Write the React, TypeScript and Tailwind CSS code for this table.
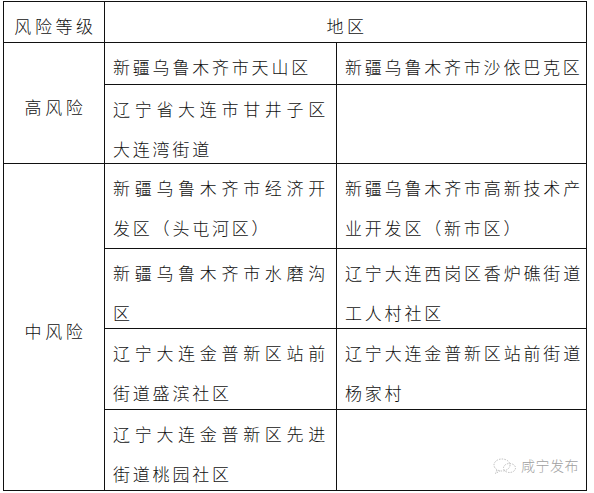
import React from "react";

const font = "font-['Noto_Sans_CJK_SC','Noto_Sans_CJK_JP',sans-serif] font-light";

function Cell({ lines, wide }: { lines: string[]; wide?: boolean }) {
  return (
    <div
      className={`bg-white pl-2 ${wide ? "pr-[3px]" : "pr-2"} pt-[4px] text-[17px] leading-[40px] tracking-[2.8px] text-[#111]`}
    >
      {lines.map((l, i) => (
        <div
          key={i}
          className={
            i < lines.length - 1 ? "whitespace-nowrap text-justify [text-align-last:justify]" : "whitespace-nowrap"
          }
        >
          {l}
        </div>
      ))}
    </div>
  );
}

function Label({ text, className = "" }: { text: string; className?: string }) {
  return (
    <div
      className={`flex items-center justify-center bg-white pt-2 text-[17px] tracking-[3.6px] text-[#111] ${className}`}
    >
      <span className="pl-[3px]">{text}</span>
    </div>
  );
}

export default function App() {
  return (
    <div className={`relative h-[493px] w-[594px] bg-white ${font}`}>
      <div className="pl-[3px] pt-[1px]">
        <div className="grid w-fit grid-cols-[100px_231px_249px] grid-rows-[40px_41px_78px_84px_79px_80px_80px] gap-px border border-[#111] bg-[#111]">
          <Label text="风险等级" className="col-start-1 row-start-1" />
          <Label text="地区" className="col-span-2 col-start-2 row-start-1" />
          <Label text="高风险" className="col-start-1 row-span-2 row-start-2" />
          <Cell lines={["新疆乌鲁木齐市天山区"]} />
          <Cell wide lines={["新疆乌鲁木齐市沙依巴克区"]} />
          <Cell lines={["辽宁省大连市甘井子区", "大连湾街道"]} />
          <Cell wide lines={[""]} />
          <Label text="中风险" className="col-start-1 row-span-4 row-start-4" />
          <Cell lines={["新疆乌鲁木齐市经济开", "发区（头屯河区）"]} />
          <Cell wide lines={["新疆乌鲁木齐市高新技术产", "业开发区（新市区）"]} />
          <Cell lines={["新疆乌鲁木齐市水磨沟", "区"]} />
          <Cell wide lines={["辽宁大连西岗区香炉礁街道", "工人村社区"]} />
          <Cell lines={["辽宁大连金普新区站前", "街道盛滨社区"]} />
          <Cell wide lines={["辽宁大连金普新区站前街道", "杨家村"]} />
          <Cell lines={["辽宁大连金普新区先进", "街道桃园社区"]} />
          <Cell wide lines={[""]} />
        </div>
      </div>
      <div className="absolute left-[492px] top-[455px] flex items-center gap-[3px] text-[14px] text-[#a0a0a0]">
        <svg width="26" height="18" viewBox="0 0 26 18" fill="none" stroke="#bdbdbd" strokeWidth="1" strokeDasharray="1.5 1.2">
          <ellipse cx="10" cy="8" rx="8" ry="6" />
          <path d="M5 13 L3.5 16.5 L8 13.8" />
          <ellipse cx="17.5" cy="11" rx="6" ry="4.5" />
        </svg>
        <span className="tracking-[0.5px]">咸宁发布</span>
      </div>
    </div>
  );
}
